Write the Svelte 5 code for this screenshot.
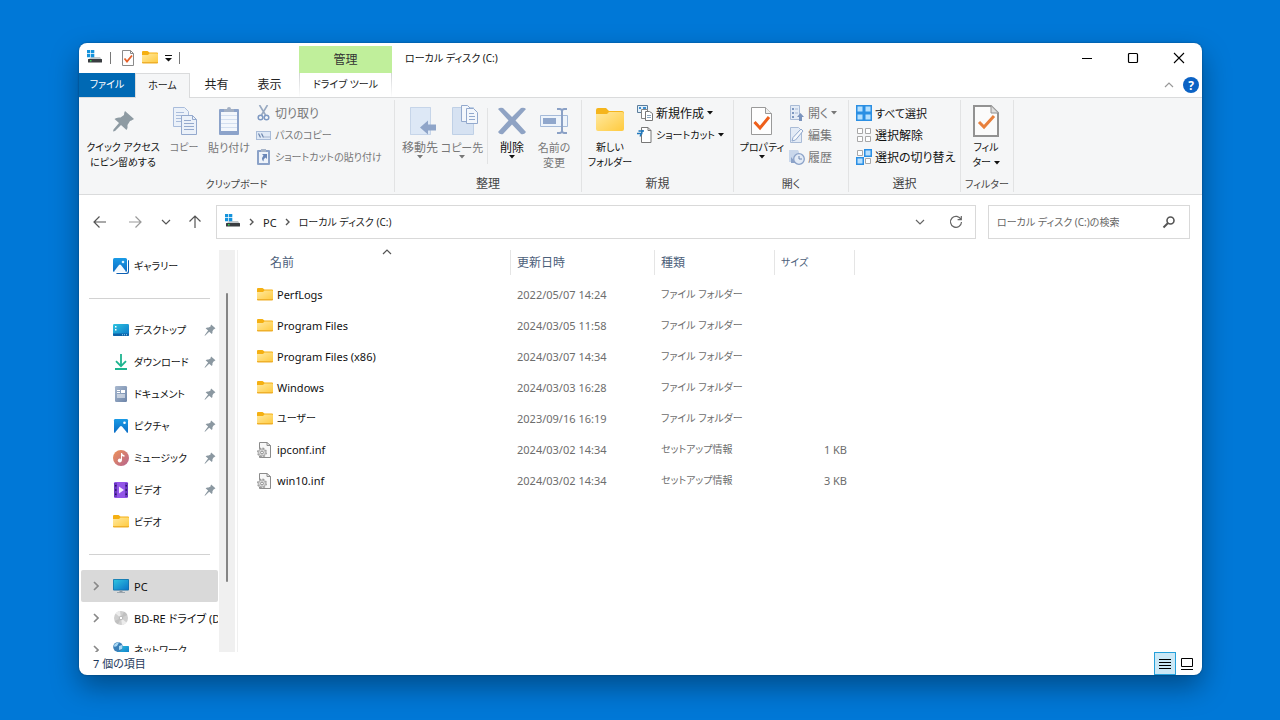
<script>
  let activeTab = 'ホーム';
  let selectedPlace = 'PC';
  let viewMode = 'details';
  let query = '';

  const places = [
    { name: 'デスクトップ', icon: 'desktop' },
    { name: 'ダウンロード', icon: 'download' },
    { name: 'ドキュメント', icon: 'document' },
    { name: 'ピクチャ', icon: 'pictures' },
    { name: 'ミュージック', icon: 'music' },
    { name: 'ビデオ', icon: 'video' }
  ];

  const devices = [
    { name: 'PC', icon: 'pc' },
    { name: 'BD-RE ドライブ (D:)', icon: 'disc' },
    { name: 'ネットワーク', icon: 'network' }
  ];

  const files = [
    { name: 'PerfLogs', date: '2022/05/07 14:24', type: 'ファイル フォルダー', icon: 'folder' },
    { name: 'Program Files', date: '2024/03/05 11:58', type: 'ファイル フォルダー', icon: 'folder' },
    { name: 'Program Files (x86)', date: '2024/03/07 14:34', type: 'ファイル フォルダー', icon: 'folder' },
    { name: 'Windows', date: '2024/03/03 16:28', type: 'ファイル フォルダー', icon: 'folder' },
    { name: 'ユーザー', date: '2023/09/16 16:19', type: 'ファイル フォルダー', icon: 'folder' },
    { name: 'ipconf.inf', date: '2024/03/02 14:34', type: 'セットアップ情報', size: '1 KB', icon: 'inf' },
    { name: 'win10.inf', date: '2024/03/02 14:34', type: 'セットアップ情報', size: '3 KB', icon: 'inf' }
  ];

  // Katakana labels are set a size smaller and kanji labels a size larger
  function script(label) {
    const count = (re) => (label.match(re) || []).length / label.length;
    if (count(/[ァ-ー]/g) > 0.5) return 'kana';
    if (count(/[一-龠]/g) >= 0.5) return 'kanji';
    return '';
  }

  function openTab(name) {
    activeTab = name;
  }

  function selectPlace(name) {
    selectedPlace = name;
  }
</script>

<svg class="defs" aria-hidden="true">
  <defs>
    <linearGradient id="gFolder" x1="0" y1="0" x2="1" y2="1">
      <stop offset="0" stop-color="#ffe9a0" />
      <stop offset="1" stop-color="#ffca3e" />
    </linearGradient>
    <linearGradient id="gTeal" x1="0" y1="0" x2="1" y2="1">
      <stop offset="0" stop-color="#2fc5e0" />
      <stop offset="1" stop-color="#0a74c8" />
    </linearGradient>
    <linearGradient id="gBlue" x1="0" y1="0" x2="0" y2="1">
      <stop offset="0" stop-color="#1a9be6" />
      <stop offset="1" stop-color="#0a6cc4" />
    </linearGradient>
    <linearGradient id="gMusic" x1="0" y1="0" x2="1" y2="1">
      <stop offset="0" stop-color="#ef9357" />
      <stop offset="1" stop-color="#b5638f" />
    </linearGradient>
    <linearGradient id="gSlate" x1="0" y1="0" x2="1" y2="1">
      <stop offset="0" stop-color="#a9b9cf" />
      <stop offset="1" stop-color="#6c84a8" />
    </linearGradient>
  </defs>
</svg>

{#snippet icon(name)}
  {#if name === 'folder'}
    <svg width="16" height="16" viewBox="0 0 16 16">
      <path d="M0 2a1 1 0 0 1 1-1h4.500l2 1.500H15a1 1 0 0 1 1 1V7H0z" fill="#f5b012" />
      <path d="M0 5h6l1.500-1.500H15a1 1 0 0 1 1 1V12a1 1 0 0 1-1 1H1a1 1 0 0 1-1-1z" fill="url(#gFolder)" />
      <path d="M0 12a1 1 0 0 0 1 1.500h14a1 1 0 0 0 1-1.500z" fill="#efb02a" />
    </svg>
  {:else if name === 'inf'}
    <svg width="16" height="16" viewBox="0 0 16 16">
      <path d="M2.500.500h7.500l3.500 3v12h-11z" fill="#f7f7f7" stroke="#8b8b8b" />
      <path d="M10 .500v3h3.500" fill="none" stroke="#8b8b8b" />
      <circle cx="5" cy="10.500" r="4.300" fill="#e4e4e4" stroke="#9a9a9a" stroke-width="1.400" stroke-dasharray="1.900 1.470" />
      <circle cx="5" cy="10.500" r="3.500" fill="#dcdcdc" stroke="#a0a0a0" stroke-width=".8" />
      <circle cx="5" cy="10.500" r="1.400" fill="#fff" stroke="#8c8c8c" />
    </svg>
  {:else if name === 'drive'}
    <svg width="16" height="16" viewBox="0 0 16 16">
      <path d="M4 7h9l2 3H1z" fill="#c4c9cc" />
      <path d="M0 0h3.300v3.300H0zM4 0h3.300v3.300H4zM0 4h3.300v3.300H0zM4 4h3.300v3.300H4z" fill="#1593dc" />
      <rect x="1" y="9" width="14" height="3.500" rx=".5" fill="#393d41" />
      <rect x="3" y="10" width="1.500" height="1.500" fill="#34d058" />
    </svg>
  {:else if name === 'gallery'}
    <svg width="16" height="16" viewBox="0 0 16 16">
      <path d="M3 15h10a2 2 0 0 0 2-2V2a1 1 0 0 1 1 1v11a2 2 0 0 1-2 2H5a2 2 0 0 1-2-1z" fill="#0d5fb3" />
      <rect width="14" height="14" rx="1.500" fill="url(#gBlue)" />
      <path d="M1 13.500l5-6.500q1-1 2 0l5 6.500q-1 .5-2 .5H2.500q-1 0-1.500-.5z" fill="#f2f9ff" />
      <circle cx="10" cy="4" r="1.300" fill="#d9f0ff" />
    </svg>
  {:else if name === 'desktop'}
    <svg width="16" height="16" viewBox="0 0 16 16">
      <rect y="2" width="16" height="12" rx="1.300" fill="url(#gTeal)" />
      <path d="M2 4h1.500v1.500H2zM2 7h1.500v1.500H2z" fill="#fff" />
      <path d="M0 11.500h16v1.500q0 1-1 1H1q-1 0-1-1z" fill="#0c62a8" />
      <path d="M9 12.300h1v1H9zM11 12.300h1v1h-1zM13 12.300h1v1h-1z" fill="#9fdcf5" />
    </svg>
  {:else if name === 'download'}
    <svg width="16" height="16" viewBox="0 0 16 16" fill="none" stroke="#1db48f" stroke-width="1.800">
      <path d="M8 0v12M3 7.200l5 5 5-5" />
      <path d="M2 15h12" />
    </svg>
  {:else if name === 'document'}
    <svg width="16" height="16" viewBox="0 0 16 16">
      <rect x="2" width="12" height="16" rx="1.200" fill="url(#gSlate)" />
      <path d="M4 4h3v1H4zM4 6h3v1H4zM8 4h4v3H8zM4 8.500h8v1H4zM4 10.500h8v1H4z" fill="#fff" />
    </svg>
  {:else if name === 'pictures'}
    <svg width="16" height="16" viewBox="0 0 16 16">
      <rect x="1" y="1" width="14" height="14" rx="1.200" fill="url(#gBlue)" />
      <path d="M2 14.500l5-6q1-1 2 0l5 6q-.5.500-1 .5H3q-.5 0-1-.5z" fill="#fff" />
      <circle cx="11.500" cy="4.700" r="1.300" fill="#fff" />
    </svg>
  {:else if name === 'music'}
    <svg width="16" height="16" viewBox="0 0 16 16">
      <circle cx="8" cy="8" r="8" fill="url(#gMusic)" />
      <circle cx="6.800" cy="10.500" r="2" fill="#fff" />
      <path d="M8 10.500V3h1q.3 1.800 2.500 2.300v1.500Q10 6.500 9 6v4.500z" fill="#fff" />
    </svg>
  {:else if name === 'video'}
    <svg width="16" height="16" viewBox="0 0 16 16">
      <rect x="1" width="14" height="16" rx="1.200" fill="#9355e8" />
      <path d="M1 1h3v14H1zM12 1h3v14h-3z" fill="#6b38c2" />
      <path d="M2 3h1.500v1.500H2zM2 7.200h1.500v1.500H2zM2 11.500h1.500V13H2zM12.500 3H14v1.500h-1.500zM12.500 7.200H14v1.500h-1.500zM12.500 11.500H14V13h-1.500z" fill="#2d1463" />
      <path d="M6 4.500L11 8l-5 3.500z" fill="#f4eaff" />
    </svg>
  {:else if name === 'pc'}
    <svg width="16" height="16" viewBox="0 0 16 16">
      <rect y="1" width="16" height="11.500" rx="1" fill="#126ca5" />
      <rect x=".7" y="1.700" width="14.600" height="10" fill="url(#gTeal)" />
      <path d="M6.500 12.500h3V14h-3z" fill="#8f9aa3" />
      <path d="M4 14h8v1H4z" fill="#9aa5ad" />
    </svg>
  {:else if name === 'disc'}
    <svg width="16" height="16" viewBox="0 0 16 16">
      <circle cx="8" cy="8" r="7" fill="#cfcfcf" />
      <path d="M8 8L2.500 3.600A7 7 0 0 1 7 1zM8 8l5.500 4.400A7 7 0 0 1 9 15z" fill="#ececec" />
      <path d="M8 8l3-6.300A7 7 0 0 1 14.300 5zM8 8l-3 6.300A7 7 0 0 1 1.700 11z" fill="#c0c0c0" />
      <circle cx="8" cy="8" r="1.800" fill="#fff" stroke="#b5b5b5" />
    </svg>
  {:else if name === 'network'}
    <svg width="16" height="16" viewBox="0 0 16 16">
      <rect x="4" y="4" width="12" height="9" rx=".6" fill="url(#gTeal)" />
      <path d="M7 14h7v1H7z" fill="#9aa5ad" />
      <circle cx="5" cy="5" r="4.800" fill="#3a7fb8" />
      <path d="M1 3q2-3 5-2.500L4 4 1.500 5zM6 4l3-1q1 2 0 4L6 8z" fill="#a9d8f3" />
    </svg>
  {:else if name === 'pin'}
    <svg width="12" height="12" viewBox="0 0 22 22">
      <path d="M13 1l8 7-2.500 1.500-1 .5-2 3.500q.5 3-1 5L9.500 14 2.500 21 1 21.500 1.500 20 7.500 12 3 8q2-2 5.500-1.500L12 4.500q0-2 1-3.500z" fill="#8b98a1" />
    </svg>
  {:else if name === 'sheetCheck'}
    <svg width="14" height="16" viewBox="0 0 14 16">
      <path d="M1.500.500h8l3 3v12h-11z" fill="#fdfdfd" stroke="#8a8a8a" />
      <path d="M9.500.500v3h3" fill="none" stroke="#8a8a8a" />
      <path d="M3.500 8.500l2.500 3 5-6" fill="none" stroke="#e5602a" stroke-width="1.800" />
    </svg>
  {:else if name === 'cut'}
    <svg width="16" height="16" viewBox="0 0 16 16" fill="none" stroke="#98a9c1">
      <path d="M3.500 0l6 10M11.500 0l-6 10" stroke-width="1.600" />
      <circle cx="4.500" cy="12.500" r="2.300" stroke="#7e99c2" stroke-width="1.500" />
      <circle cx="10.500" cy="12.500" r="2.300" stroke="#7e99c2" stroke-width="1.500" />
    </svg>
  {:else if name === 'path'}
    <svg width="16" height="16" viewBox="0 0 16 16">
      <rect x=".5" y="4.500" width="14" height="8" fill="#dfe9f6" stroke="#a9bcd8" />
      <path d="M2.500 6.500l2 4M5.500 6.500l2 4" stroke="#6b84ac" stroke-width="1.200" />
      <path d="M8.500 9.500h1v1h-1zM10.500 9.500h1v1h-1zM12.500 9.500h1v1h-1z" fill="#6b84ac" />
    </svg>
  {:else if name === 'pasteLink'}
    <svg width="16" height="16" viewBox="0 0 16 16">
      <rect x="1" y="1" width="13" height="15" rx="1" fill="#8ba2c8" />
      <rect x="3" y="3" width="9" height="11" fill="#eef3fa" />
      <path d="M5 0h5v3H5z" fill="#a8b5c9" />
      <path d="M6 5h5v5L9.500 8.500Q7 10 7.500 12.500 4.500 10 7.500 6.500z" fill="#6a87b8" />
    </svg>
  {:else if name === 'newItem'}
    <svg width="16" height="16" viewBox="0 0 16 16">
      <path d="M.5.500h10v7H.5z" fill="#e4f1fb" stroke="#5c7d9b" />
      <path d="M2 2h2v2H2zM6 2h3v2H6z" fill="#3d8fd1" />
      <path d="M4.500 4.500h6v9h-6z" fill="#fff" stroke="#858585" />
      <path d="M8.500 6.500h4l3 2v7h-7z" fill="#fff" stroke="#777" />
      <path d="M10 10.500h4M10 12.500h4" stroke="#8ca6bd" />
    </svg>
  {:else if name === 'shortcut'}
    <svg width="16" height="16" viewBox="0 0 16 16">
      <path d="M4.500.500h6.500l3 3v12h-9.500z" fill="#fff" stroke="#777" />
      <path d="M11 .500v3h3" fill="none" stroke="#777" />
      <path d="M1.500 4h5.500M0 6.500h5.500M3 9.500L6 3" stroke="#1f78bd" stroke-width="1.300" fill="none" />
    </svg>
  {:else if name === 'openItem'}
    <svg width="16" height="16" viewBox="0 0 16 16">
      <path d="M1.500.500h9v14h-9z" fill="#e3ebf6" stroke="#a9bbd6" />
      <path d="M3 3h2v2H3zM3 7h2v2H3zM3 11h2v2H3z" fill="#7d97c0" />
      <path d="M6 4h3M6 8h3" stroke="#a9bbd6" />
      <path d="M10 16v-4H8l3.500-4 3.500 4h-2v4z" fill="#7a93bd" />
    </svg>
  {:else if name === 'edit'}
    <svg width="16" height="16" viewBox="0 0 16 16">
      <path d="M1.500.500h8l3 3v12h-11z" fill="#e3ebf6" stroke="#a9bbd6" />
      <path d="M3 14l1-3.500L12 2l2 2L6.500 13z" fill="#f5f8fc" stroke="#90a8cd" />
    </svg>
  {:else if name === 'history'}
    <svg width="16" height="16" viewBox="0 0 16 16">
      <path d="M0 1h9l1 2v10H0z" fill="#c9d7eb" />
      <circle cx="10" cy="10" r="5.300" fill="#e3ebf6" stroke="#8ba2c8" stroke-width="1.300" />
      <path d="M10 7v3h3" fill="none" stroke="#7189b2" />
      <path d="M2 8v6h5z" fill="#8ba2c8" />
    </svg>
  {:else if name === 'selectAll'}
    <svg width="16" height="16" viewBox="0 0 16 16" fill="#b5e0ff" stroke="#2b8fe3" stroke-width="1.500">
      <path d="M.750.750h6.500v6.500H.750zM8.750.750h6.500v6.500h-6.500zM.750 8.750h6.500v6.500H.750zM8.750 8.750h6.500v6.500h-6.500z" />
    </svg>
  {:else if name === 'selectNone'}
    <svg width="16" height="16" viewBox="0 0 16 16" fill="#fff" stroke="#a8a8a8">
      <path d="M1.500 1.500h5v5h-5zM9.500 1.500h5v5h-5zM1.500 9.500h5v5h-5zM9.500 9.500h5v5h-5z" />
    </svg>
  {:else if name === 'selectInvert'}
    <svg width="16" height="16" viewBox="0 0 16 16">
      <path d="M1.500 1.500h5v5h-5zM9.500 9.500h5v5h-5z" fill="#fff" stroke="#a8a8a8" />
      <path d="M8.750.750h6.500v6.500h-6.500zM.750 8.750h6.500v6.500H.750z" fill="#b8e0ff" stroke="#2b8fe3" stroke-width="1.500" />
    </svg>
  {:else if name === 'chevronRight'}
    <svg width="6" height="10" viewBox="0 0 6 10" fill="none" stroke="currentColor" stroke-width="1.600">
      <path d="M1 1l4 4-4 4" />
    </svg>
  {:else if name === 'crumb'}
    <svg width="6" height="8" viewBox="0 0 6 8" fill="none" stroke="#555" stroke-width="1.400">
      <path d="M1 1l3 3-3 3" />
    </svg>
  {:else if name === 'chevronDown'}
    <svg width="10" height="10" viewBox="0 0 10 10" fill="none" stroke="currentColor" stroke-width="1.200">
      <path d="M1 3l4 4 4-4" />
    </svg>
  {:else if name === 'chevronUp'}
    <svg width="10" height="10" viewBox="0 0 10 10" fill="none" stroke="currentColor" stroke-width="1.200">
      <path d="M1 7l4-4 4 4" />
    </svg>
  {:else if name === 'caret'}
    <svg width="6" height="4" viewBox="0 0 6 4"><path d="M0 0h6L3 3.500z" fill="currentColor" /></svg>
  {/if}
{/snippet}

{#snippet bigIcon(name)}
  <svg width="32" height="32" viewBox="0 0 32 32">
    {#if name === 'pin'}
      <path d="M18 6l9 8-2.500 1.500-1.500.5-2.500 4q.5 3-1 5L14 20 8 26l-2 .5.500-2L12 18l-4.500-4q2-2 6-1.500L17 10q0-2.500 1-4z" fill="#8e9ba3" />
    {:else if name === 'copy'}
      <path d="M5.500 2.500h11l4 4v15h-15z" fill="#ebf1f9" stroke="#a9bcdb" />
      <path d="M8 7.500h8M8 10.500h9M8 13.500h6M8 16.500h6" stroke="#a9bcdb" />
      <path d="M13.500 10.500h11l4 4v15h-15z" fill="#ebf1f9" stroke="#94a9cd" />
      <path d="M24.500 10.500v4h4" fill="none" stroke="#94a9cd" />
      <path d="M16 15.500h7M16 18.500h10M16 21.500h10M16 24.500h10" stroke="#94a9cd" />
    {:else if name === 'paste'}
      <rect x="6" y="4" width="20" height="26" rx="1" fill="#8ca3ca" />
      <rect x="8" y="7" width="16" height="19" fill="#f3f7fc" />
      <path d="M8 10.500h16M8 14.500h16M8 18.500h16M8 22.500h16" stroke="#d3dff0" />
      <path d="M11 4h3a2 2 0 0 1 4 0h3v3H11z" fill="#a3b0c4" />
    {:else if name === 'moveTo'}
      <path d="M6 2h21v28H6z" fill="#d6e2f2" />
      <path d="M6.500 2.500h20v27h-20z" fill="#dde8f6" stroke="#c6d5e9" />
      <path d="M16 22.500l8-7v4h8v6h-8v4z" fill="#8fa5c9" />
    {:else if name === 'copyTo'}
      <path d="M6.500 2.500h21v27h-21z" fill="#d6e2f2" stroke="#bfd0e6" />
      <path d="M15.500.500h6l3 3v13h-9z" fill="#f3f7fc" stroke="#93a9cd" />
      <path d="M20.500 3.500h7l4 4v11h-11z" fill="#f3f7fc" stroke="#93a9cd" />
      <path d="M23 8.500h5M23 11.500h6M23 14.500h6" stroke="#93a9cd" />
    {:else if name === 'delete'}
      <path d="M2 4q2-2 5-1l9 9 9-9q3-1 5 1L19.500 15.500 30 27q-2 3-5 2l-9-9.500L7 29q-3 1-5-2l10.500-11.500z" fill="#8fa3c4" />
    {:else if name === 'rename'}
      <path d="M2.500 10.500h27v11h-27z" fill="#eef4fb" stroke="#a5bad9" />
      <path d="M5 13h13v6H5z" fill="#90a7cc" />
      <path d="M19 4h3l2 1 2-1h3M19 28h3l2-1 2 1h3M24 4v24" fill="none" stroke="#8ba1c6" stroke-width="2" />
    {:else if name === 'newFolder'}
      <path d="M2 5a2 2 0 0 1 2-2h8l3 3h13a2 2 0 0 1 2 2v4H2z" fill="#f5b51c" />
      <path d="M2 9h11l2-2h13a2 2 0 0 1 2 2v15a2 2 0 0 1-2 2H4a2 2 0 0 1-2-2z" fill="url(#gFolder)" />
    {:else if name === 'properties'}
      <path d="M5.500 2.500h14l6 6v21h-20z" fill="#fefefe" stroke="#9a9a9a" />
      <path d="M19.500 2.500v6h6" fill="#eee" stroke="#9a9a9a" />
      <path d="M8.500 17l5.500 6 9-11" fill="none" stroke="#ee5f1b" stroke-width="3" />
    {:else if name === 'filter'}
      <path d="M4 1h17l7 7v23H4z" fill="#fbfbfb" stroke="#929292" stroke-width="2" />
      <path d="M21 1v7h7" fill="#ddd" stroke="#929292" />
      <path d="M9 17l5 5 10-11" fill="none" stroke="#e8803c" stroke-width="3" />
    {/if}
  </svg>
{/snippet}

{#snippet small(name, label, enabled, menu)}
  <button class="small {script(label)}" disabled={!enabled}>
    {@render icon(name)}
    <span>{label}</span>
    {#if menu}{@render icon('caret')}{/if}
  </button>
{/snippet}

<main>
  <div class="window">
    <header>
      <div class="quick">
        {@render icon('drive')}
        <i></i>
        <button aria-label="プロパティ">{@render icon('sheetCheck')}</button>
        <button aria-label="新しいフォルダー">{@render icon('folder')}</button>
        <button class="customize" aria-label="クイック アクセス ツール バーのカスタマイズ">
          <svg width="7" height="7" viewBox="0 0 7 7"><path d="M0 0h7v1H0zM0 3h7L3.500 6.500z" fill="#111" /></svg>
        </button>
        <i></i>
      </div>
      <div class="context">管理</div>
      <h1 class="kana">ローカル ディスク (C:)</h1>
      <div class="controls">
        <button aria-label="最小化">
          <svg width="12" height="12" viewBox="0 0 12 12"><path d="M1 6.500h10" stroke="#000" /></svg>
        </button>
        <button aria-label="最大化">
          <svg width="12" height="12" viewBox="0 0 12 12"><rect x="1.500" y="1.500" width="9" height="9" rx="1" fill="none" stroke="#000" stroke-width="1.200" /></svg>
        </button>
        <button aria-label="閉じる">
          <svg width="12" height="12" viewBox="0 0 12 12"><path d="M1 1l10 10M11 1L1 11" stroke="#000" stroke-width="1.100" /></svg>
        </button>
      </div>
    </header>

    <nav class="tabs">
      <button class="file kana">ファイル</button>
      {#each ['ホーム', '共有', '表示'] as tab}
        <button class={script(tab)} class:active={activeTab === tab} on:click={() => openTab(tab)}>{tab}</button>
      {/each}
      <button class="tool-tab kana">ドライブ ツール</button>
      <div class="tabs-end">
        <button aria-label="リボンの最小化">{@render icon('chevronUp')}</button>
        <button class="help" aria-label="ヘルプ">?</button>
      </div>
    </nav>

    <div class="ribbon">
      <section class="clipboard">
        <div class="tools">
          <button class="big widest kana">{@render bigIcon('pin')}<span>クイック アクセス<br />にピン留めする</span></button>
          <button class="big kana" disabled>{@render bigIcon('copy')}<span>コピー</span></button>
          <button class="big wide" disabled>{@render bigIcon('paste')}<span>貼り付け</span></button>
          <div class="stack">
            {@render small('cut', '切り取り', false)}
            {@render small('path', 'パスのコピー', false)}
            {@render small('pasteLink', 'ショートカットの貼り付け', false)}
          </div>
        </div>
        <h2 class="kana">クリップボード</h2>
      </section>
      <section class="organize">
        <div class="tools">
          <button class="big kanji" disabled>{@render bigIcon('moveTo')}<span>移動先</span>{@render icon('caret')}</button>
          <button class="big" disabled>{@render bigIcon('copyTo')}<span>コピー先</span>{@render icon('caret')}</button>
          <hr />
          <button class="big kanji">{@render bigIcon('delete')}<span>削除</span>{@render icon('caret')}</button>
          <button class="big" disabled>{@render bigIcon('rename')}<span>名前の<br />変更</span></button>
        </div>
        <h2 class="kanji">整理</h2>
      </section>
      <section class="create">
        <div class="tools">
          <button class="big wide kana">{@render bigIcon('newFolder')}<span>新しい<br />フォルダー</span></button>
          <div class="stack">
            {@render small('newItem', '新規作成', true, true)}
            {@render small('shortcut', 'ショートカット', true, true)}
          </div>
        </div>
        <h2 class="kanji">新規</h2>
      </section>
      <section class="open">
        <div class="tools">
          <button class="big wide kana">{@render bigIcon('properties')}<span>プロパティ</span>{@render icon('caret')}</button>
          <div class="stack">
            {@render small('openItem', '開く', false, true)}
            {@render small('edit', '編集', false)}
            {@render small('history', '履歴', false)}
          </div>
        </div>
        <h2>開く</h2>
      </section>
      <section class="select">
        <div class="tools">
          <div class="stack">
            {@render small('selectAll', 'すべて選択', true)}
            {@render small('selectNone', '選択解除', true)}
            {@render small('selectInvert', '選択の切り替え', true)}
          </div>
        </div>
        <h2 class="kanji">選択</h2>
      </section>
      <section class="filter">
        <div class="tools">
          <button class="big kana">{@render bigIcon('filter')}<span>フィル<br />ター {@render icon('caret')}</span></button>
        </div>
        <h2 class="kana">フィルター</h2>
      </section>
    </div>

    <div class="address-row">
      <div class="history">
        <button aria-label="戻る">
          <svg width="14" height="14" viewBox="0 0 14 14" fill="none" stroke="#555" stroke-width="1.200"><path d="M13 7H1M6.500 1.500L1 7l5.500 5.500" /></svg>
        </button>
        <button aria-label="進む">
          <svg width="14" height="14" viewBox="0 0 14 14" fill="none" stroke="#999" stroke-width="1.200"><path d="M1 7h12M7.500 1.500L13 7l-5.500 5.500" /></svg>
        </button>
        <button class="recent" aria-label="最近表示した場所">{@render icon('chevronDown')}</button>
        <button aria-label="上へ">
          <svg width="14" height="14" viewBox="0 0 14 14" fill="none" stroke="#555" stroke-width="1.200"><path d="M7 13V1M1.500 6.500L7 1l5.500 5.500" /></svg>
        </button>
      </div>
      <div class="address">
        {@render icon('drive')}
        {@render icon('crumb')}
        <button>PC</button>
        {@render icon('crumb')}
        <button class="kana">ローカル ディスク (C:)</button>
        <div class="address-end">
          <button aria-label="以前の場所">{@render icon('chevronDown')}</button>
          <button aria-label="最新の情報に更新">
            <svg width="14" height="14" viewBox="0 0 14 14" fill="none" stroke="#666" stroke-width="1.200"><path d="M12 4.500A5.500 5.500 0 1 0 12.500 7M12.300 1v3.700H8.600" /></svg>
          </button>
        </div>
      </div>
      <div class="search">
        <input class="kana" type="text" aria-label="検索" placeholder="ローカル ディスク (C:)の検索" bind:value={query} />
        <svg width="14" height="14" viewBox="0 0 14 14" fill="none" stroke="#555"><circle cx="8.500" cy="5.500" r="3.500" stroke-width="1.600" /><path d="M6 8l-4.500 4.500" stroke-width="2" /></svg>
      </div>
    </div>

    <div class="content">
      <aside>
        <button class="place kana">{@render icon('gallery')}<span>ギャラリー</span></button>
        <hr />
        {#each places as place}
          <button class="place kana" class:selected={selectedPlace === place.name} on:click={() => selectPlace(place.name)}>
            {@render icon(place.icon)}
            <span>{place.name}</span>
            {@render icon('pin')}
          </button>
        {/each}
        <button class="place kana">{@render icon('folder')}<span>ビデオ</span></button>
        <hr />
        {#each devices as device}
          <button class="place device {script(device.name)}" class:selected={selectedPlace === device.name} on:click={() => selectPlace(device.name)}>
            {@render icon('chevronRight')}
            {@render icon(device.icon)}
            <span>{device.name}</span>
          </button>
        {/each}
      </aside>
      <div class="scrollbar"><div class="thumb"></div></div>
      <div class="files">
        <table>
          <colgroup>
            <col class="col-name" />
            <col class="col-date" />
            <col class="col-type" />
            <col class="col-size" />
          </colgroup>
          <thead>
            <tr>
              <th><div class="sorted">名前<b>{@render icon('chevronUp')}</b></div></th>
              <th><div>更新日時</div></th>
              <th><div>種類</div></th>
              <th><div class="kana">サイズ</div></th>
            </tr>
          </thead>
          <tbody>
            {#each files as file}
              <tr>
                <td><div class="name {script(file.name)}">{@render icon(file.icon)}{file.name}</div></td>
                <td>{file.date}</td>
                <td class={script(file.type)}>{file.type}</td>
                <td class="size">{file.size ?? ''}</td>
              </tr>
            {/each}
          </tbody>
        </table>
      </div>
    </div>

    <footer>
      <span>7 個の項目</span>
      <div class="views">
        <button class:on={viewMode === 'details'} aria-label="詳細" on:click={() => (viewMode = 'details')}>
          <svg width="12" height="12" viewBox="0 0 12 12"><path d="M0 1.500h12M0 4.500h12M0 7.500h12M0 10.500h12" stroke="#000" /></svg>
        </button>
        <button class:on={viewMode === 'icons'} aria-label="大きい縮小版" on:click={() => (viewMode = 'icons')}>
          <svg width="12" height="12" viewBox="0 0 12 12"><path d="M.500.500h11v8H.500zM0 11.500h12" fill="none" stroke="#000" /></svg>
        </button>
      </div>
    </footer>
  </div>
</main>

<style>
  :global(body) {
    background: #0078d7;
  }

  main {
    display: flex;
    box-sizing: border-box;
    height: 100vh;
    padding: 43px 78px 45px 79px;
    font-family: 'Noto Sans', 'Noto Sans CJK JP', sans-serif;
    font-feature-settings: 'palt';
    font-size: 11px;
    line-height: 15px;
    color: #111;
  }

  .defs {
    position: absolute;
    width: 0;
    height: 0;
  }

  .window {
    flex: 1;
    min-width: 0;
    display: flex;
    flex-direction: column;
    background: #fff;
    border-radius: 8px;
    overflow: hidden;
    box-shadow: 0 12px 28px rgba(0, 0, 0, 0.36), 0 0 2px rgba(0, 0, 0, 0.4);
  }

  button {
    display: flex;
    align-items: center;
    justify-content: center;
    padding: 0;
    border: none;
    background: none;
    font: inherit;
    font-feature-settings: inherit;
    color: inherit;
    white-space: nowrap;
  }

  svg {
    flex-shrink: 0;
  }

  h1, h2 {
    margin: 0;
    font-size: 11px;
    font-weight: normal;
  }

  .kana {
    font-size: 10px;
  }

  .kanji {
    font-size: 12px;
  }

  header {
    display: flex;
    flex-shrink: 0;
    height: 30px;
  }

  .quick {
    display: flex;
    align-items: center;
    gap: 7px;
    box-sizing: border-box;
    width: 220px;
    padding-left: 8px;
  }

  .quick i {
    width: 1px;
    height: 12px;
    background: #777;
  }

  .quick i:nth-of-type(1) {
    margin-right: 3px;
  }

  .context {
    width: 93px;
    margin-top: 3px;
    background: #c0ef9b;
    font-size: 12px;
    line-height: 27px;
    text-align: center;
    color: #333;
  }

  h1 {
    padding-left: 13px;
    line-height: 30px;
  }

  .controls {
    display: flex;
    margin-left: auto;
  }

  .controls button {
    width: 46px;
  }

  .tabs {
    display: flex;
    flex-shrink: 0;
    height: 24px;
    border-bottom: 1px solid #dadbdc;
  }

  .tabs > button {
    width: 53px;
    padding-bottom: 1px;
    color: #222;
  }

  .tabs .file {
    width: 56px;
    background: #0069b4;
    color: #fff;
  }

  .tabs .active {
    box-sizing: border-box;
    width: 55px;
    height: 25px;
    border: 1px solid #dadbdc;
    border-bottom: none;
    background: #f5f6f7;
  }

  .tabs .tool-tab {
    width: 93px;
    margin-left: 3px;
    border-left: 1px solid;
    border-right: 1px solid;
    border-image: linear-gradient(#d0d2d4, #fff) 1;
  }

  .tabs-end {
    display: flex;
    align-items: center;
    gap: 9px;
    margin-left: auto;
    padding-right: 3px;
    color: #999;
  }

  .help {
    width: 16px;
    height: 16px;
    border-radius: 50%;
    background: #0b62c4;
    font-size: 12px;
    font-weight: bold;
    color: #fff;
  }

  .ribbon {
    display: flex;
    flex-shrink: 0;
    height: 96px;
    background: #f5f6f7;
    border-bottom: 1px solid #dadbdc;
  }

  section {
    display: flex;
    flex-direction: column;
    box-sizing: border-box;
    margin: 2px 0;
    border-right: 1px solid #e2e3e4;
  }

  .clipboard {
    width: 316px;
  }

  .organize {
    width: 187px;
  }

  .create {
    width: 152px;
  }

  .open {
    width: 115px;
  }

  .select {
    width: 112px;
  }

  .filter {
    width: 53px;
  }

  .tools {
    display: flex;
    flex: 1;
    padding-left: 4px;
  }

  h2 {
    height: 16px;
    line-height: 16px;
    text-align: center;
    white-space: nowrap;
    color: #444;
  }

  .big {
    flex-direction: column;
    justify-content: flex-start;
    width: 42px;
    padding-top: 5px;
  }

  .big.wide {
    width: 48px;
  }

  .big.widest {
    width: 80px;
  }

  .big span {
    margin-top: 3px;
  }

  .big span :global(svg) {
    vertical-align: middle;
  }

  button:disabled {
    color: #777;
  }

  .tools hr {
    width: 1px;
    height: 56px;
    margin: 8px 3px 8px 4px;
    border: none;
    background: #e2e3e4;
  }

  .stack {
    display: flex;
    flex-direction: column;
    padding: 2px 0 0 3px;
  }

  .small {
    justify-content: flex-start;
    gap: 3px;
    height: 22px;
  }

  .address-row {
    display: flex;
    flex-shrink: 0;
    gap: 12px;
    height: 34px;
    padding: 10px 12px 11px 14px;
  }

  .history {
    display: flex;
    align-items: center;
    gap: 21px;
    width: 111px;
    color: #555;
  }

  .history .recent {
    margin: 0 -4px 0 -2px;
  }

  .address {
    flex: 1;
    display: flex;
    align-items: center;
    gap: 8px;
    box-sizing: border-box;
    padding: 0 12px 0 8px;
    border: 1px solid #d9d9d9;
    color: #222;
  }

  .address-end {
    display: flex;
    gap: 24px;
    margin-left: auto;
    color: #666;
  }

  .search {
    display: flex;
    align-items: center;
    box-sizing: border-box;
    width: 202px;
    padding: 0 13px 0 8px;
    border: 1px solid #d9d9d9;
  }

  input {
    flex: 1;
    min-width: 0;
    padding: 0;
    border: none;
    outline: none;
    font-family: inherit;
    font-feature-settings: inherit;
  }

  input::placeholder {
    color: #666;
  }

  .content {
    flex: 1;
    min-height: 0;
    display: flex;
  }

  aside {
    width: 140px;
    overflow: hidden;
  }

  aside hr {
    height: 1px;
    margin: 16px 9px 15px 10px;
    border: none;
    background: #d2d2d2;
  }

  .place {
    justify-content: flex-start;
    gap: 5px;
    box-sizing: border-box;
    width: 137px;
    height: 32px;
    margin-left: 2px;
    padding: 0 2px 0 32px;
    border-radius: 2px;
    overflow: hidden;
  }

  .place span {
    flex: 1;
    text-align: left;
  }

  .place.device {
    padding: 0 0 0 12px;
  }

  .place.device > :global(svg:first-child) {
    margin-right: 9px;
    color: #888;
  }

  .place.selected {
    background: #d9d9d9;
  }

  .scrollbar {
    width: 16px;
    background: #f0f0f0;
  }

  .thumb {
    width: 2px;
    height: 72%;
    margin: 43px auto 0;
    border-radius: 1px;
    background: #858585;
  }

  .files {
    flex: 1;
    margin-left: 2px;
    border-left: 1px solid #f0f0f0;
  }

  table {
    table-layout: fixed;
    width: 617px;
    border-collapse: collapse;
  }

  .col-name {
    width: 273px;
  }

  .col-date {
    width: 144px;
  }

  .col-type {
    width: 120px;
  }

  .col-size {
    width: 80px;
  }

  th {
    padding: 0 0 4px;
    font-size: 12px;
    font-weight: normal;
    text-align: left;
    color: #4c607a;
  }

  th div {
    position: relative;
    height: 25px;
    padding-left: 6px;
    border-right: 1px solid #e5e5e5;
    line-height: 25px;
  }

  th .sorted {
    padding-left: 32px;
  }

  .sorted b {
    position: absolute;
    top: -3px;
    left: 144px;
    line-height: 10px;
    color: #555;
  }

  .sorted b :global(svg) {
    display: block;
  }

  td {
    height: 31px;
    padding: 0 0 0 6px;
    color: #6d6d6d;
  }

  .name {
    display: flex;
    align-items: center;
    gap: 4px;
    padding-left: 13px;
    color: #111;
  }

  td.size {
    padding-right: 8px;
    text-align: right;
  }

  footer {
    display: flex;
    align-items: center;
    justify-content: space-between;
    flex-shrink: 0;
    height: 23px;
    padding: 0 4px 0 14px;
    color: #1e395b;
  }

  .views {
    display: flex;
  }

  .views button {
    box-sizing: border-box;
    width: 22px;
    height: 23px;
    border: 1px solid transparent;
  }

  .views .on {
    border-color: #26a0da;
    background: #cbe8f6;
  }
</style>
